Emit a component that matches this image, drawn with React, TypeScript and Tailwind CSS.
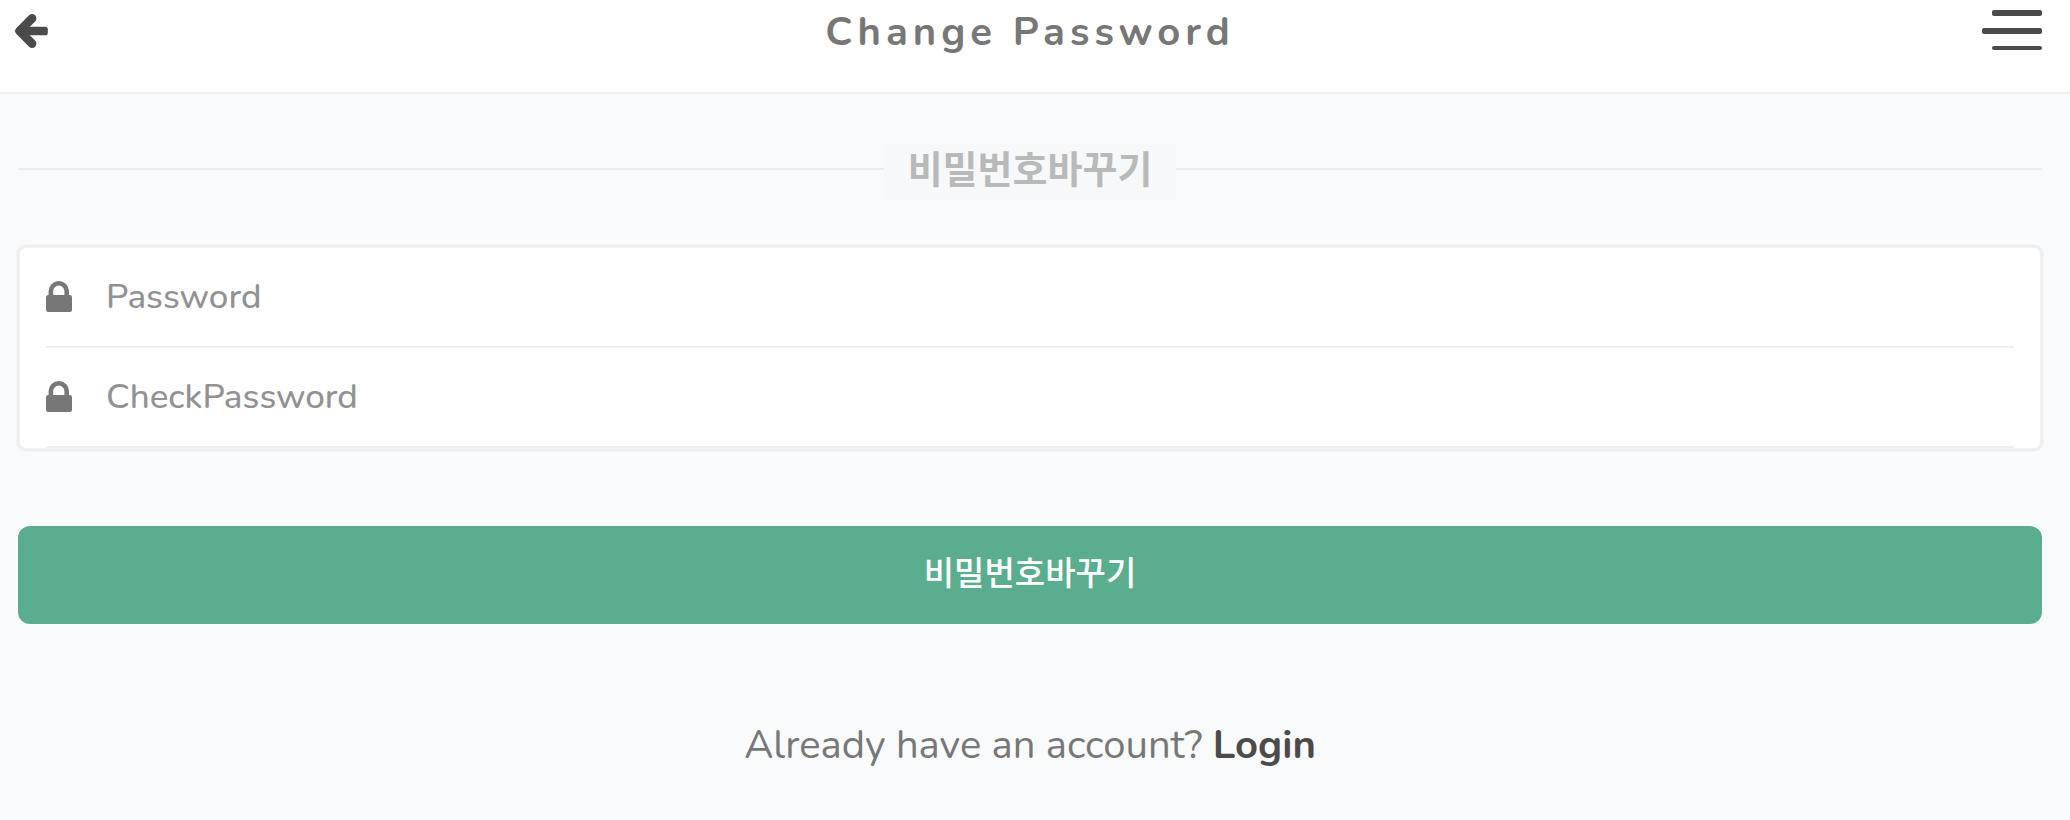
import { useState } from "react";

function ArrowLeftIcon() {
  return (
    <svg viewBox="0 0 34 34" className="size-[34px]" aria-hidden="true">
      <path
        d="M18.1 4.4 L5.5 17 L18.1 29.6"
        fill="none"
        stroke="currentColor"
        strokeWidth="8.6"
        strokeLinecap="round"
        strokeLinejoin="round"
      />
      <path d="M0.6 17 L8 9.6 V24.4 Z" fill="currentColor" />
      <rect x="6" y="12.7" width="27.8" height="8.6" rx="2.6" fill="currentColor" />
    </svg>
  );
}

function LockIcon() {
  return (
    <svg viewBox="0 0 26 34" className="h-[34px] w-[26px]" aria-hidden="true">
      <path
        d="M4.9 16 V11.1 A7.9 7.9 0 0 1 20.7 11.1 V16"
        fill="none"
        stroke="currentColor"
        strokeWidth="4.6"
      />
      <rect y="15" width="26" height="17" rx="2.2" fill="currentColor" />
    </svg>
  );
}

interface PasswordFieldProps {
  id: string;
  placeholder: string;
}

function PasswordField({ id, placeholder }: PasswordFieldProps) {
  const [value, setValue] = useState("");
  return (
    <div className="flex h-[100px] items-center gap-[34px] border-b-2 border-[#eeeeee]">
      <label htmlFor={id} className="shrink-0 text-[#777777]">
        <LockIcon />
      </label>
      <input
        id={id}
        type="password"
        aria-label={placeholder}
        placeholder={placeholder}
        value={value}
        onChange={(event) => setValue(event.target.value)}
        className="h-full min-w-0 flex-1 bg-transparent pb-0.5 text-[35px] font-medium text-[#4b4b4b] outline-none placeholder:text-[#929292]"
      />
    </div>
  );
}

export default function App() {
  return (
    <div className="min-h-screen bg-[#f9fafc] font-['Nunito','Open_Sans','Noto_Sans_CJK_KR',sans-serif] text-[#777777]">
      <header className="flex h-[94px] items-start justify-between border-b-2 border-[#eeeeee] bg-white pr-7 pl-3.5">
        <div className="flex h-[62px] w-16 items-center">
          <button type="button" aria-label="Back" className="text-[#4b4b4b]">
            <ArrowLeftIcon />
          </button>
        </div>
        <h1 className="text-[40px] leading-[64px] font-bold tracking-[5px]">Change Password</h1>
        <button
          type="button"
          aria-label="Menu"
          className="flex w-[60px] flex-col items-end gap-3 pt-2.5"
        >
          <span className="h-1.5 w-[50px] rounded-xs bg-[#4b4b4b]" />
          <span className="h-1.5 w-[60px] rounded-xs bg-[#4b4b4b]" />
          <span className="h-1 w-[50px] rounded-xs bg-[#4b4b4b]" />
        </button>
      </header>

      <main className="pt-[50px] pr-7 pl-[18px]">
        <div className="flex items-start">
          <span className="mt-6 h-0.5 flex-1 bg-[#ebecec]" />
          <h2 className="h-14 bg-[#f7f8fa] px-6 text-[38px] leading-[54px] font-bold text-[#b8baba]">
            비밀번호바꾸기
          </h2>
          <span className="mt-6 h-0.5 flex-1 bg-[#ebecec]" />
        </div>

        <form onSubmit={(event) => event.preventDefault()}>
          <div className="mt-[46px] rounded-lg border-2 border-[#f0f0f0] bg-white px-[26px] shadow-[0_0_2px_1px_rgba(0,0,0,0.08)]">
            <PasswordField id="password" placeholder="Password" />
            <PasswordField id="check-password" placeholder="CheckPassword" />
          </div>
          <button
            type="submit"
            className="mt-[76px] h-[98px] w-full rounded-xl bg-[#5aae8f] text-[33px] font-medium text-white"
          >
            비밀번호바꾸기
          </button>
        </form>

        <p className="mt-[93px] text-center text-[40px] leading-[56px]">
          Already have an account?{" "}
          <a href="#login" className="font-bold text-[#4b4b4b]">
            Login
          </a>
        </p>
      </main>
    </div>
  );
}
